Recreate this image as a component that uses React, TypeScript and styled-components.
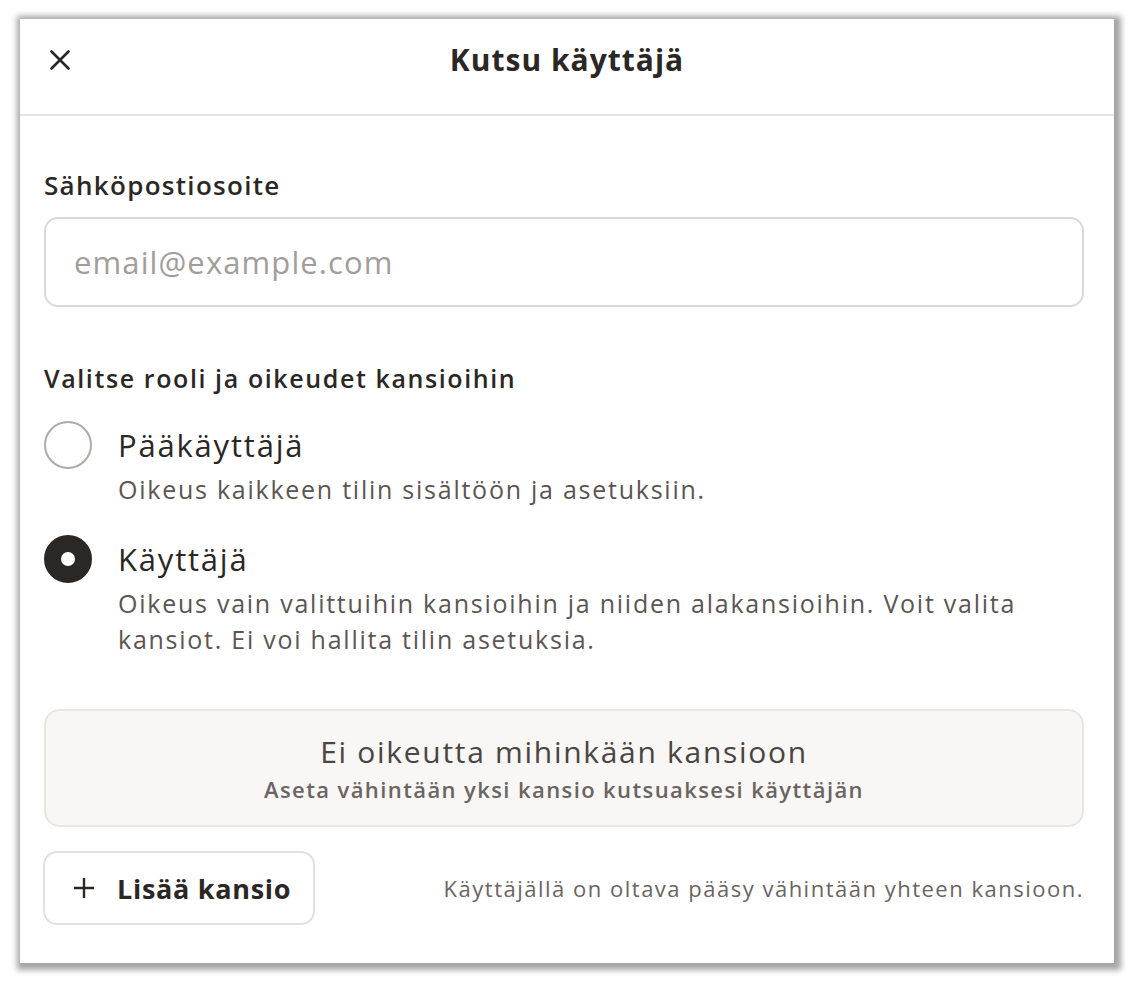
import React from 'react';
import styled, { createGlobalStyle } from 'styled-components';

const GlobalStyle = createGlobalStyle`
  html, body {
    margin: 0;
    padding: 0;
    background: #ffffff;
  }
  body {
    font-family: 'Open Sans', 'Noto Sans', sans-serif;
    color: #2b2725;
  }
`;

const Page = styled.div`
  width: 1134px;
  height: 982px;
  padding: 19px 20px 0 20px;
  box-sizing: border-box;
`;

const Dialog = styled.div`
  width: 1094px;
  height: 944px;
  background: #ffffff;
  box-shadow: 2px 2px 6px 5px rgba(0, 0, 0, 0.36);
  display: flex;
  flex-direction: column;
`;

const Header = styled.header`
  height: 97px;
  flex-shrink: 0;
  display: grid;
  grid-template-columns: 40px 1fr 40px;
  align-items: start;
  padding: 21px 30px 0 30px;
  border-bottom: 2px solid #e6e4e3;
  box-sizing: border-box;
`;

const CloseButton = styled.button`
  width: 20px;
  height: 20px;
  margin-top: 10px;
  padding: 0;
  border: none;
  background: transparent;
  display: flex;
  align-items: center;
  justify-content: center;
  cursor: pointer;
`;

const Title = styled.h1`
  margin: 0;
  text-align: center;
  font-size: 30px;
  font-weight: 700;
  line-height: 40px;
  letter-spacing: 1px;
  color: #2b2725;
`;

const Body = styled.div`
  flex: 1;
  padding: 53px 30px 0 24px;
  display: flex;
  flex-direction: column;
`;

const FieldLabel = styled.label`
  font-size: 26px;
  font-weight: 600;
  line-height: 32px;
  letter-spacing: 1.3px;
  color: #2b2725;
`;

const EmailInput = styled.input`
  margin-top: 16px;
  height: 90px;
  box-sizing: border-box;
  border: 2px solid #dcd8d5;
  border-radius: 14px;
  padding: 0 28px;
  font-family: inherit;
  font-size: 31px;
  letter-spacing: 1.1px;
  color: #2b2725;
  outline: none;

  &::placeholder {
    color: #a39d9a;
  }
`;

const SectionLabel = styled.div`
  margin-top: 55px;
  font-size: 25px;
  font-weight: 600;
  line-height: 32px;
  letter-spacing: 1.6px;
  color: #2b2725;
`;

const RoleList = styled.div`
  margin-top: 27px;
  display: flex;
  flex-direction: column;
  gap: 28px;
`;

const RoleRow = styled.label`
  display: flex;
  align-items: flex-start;
  gap: 26px;
  cursor: pointer;
`;

const Radio = styled.span<{ $checked?: boolean }>`
  flex-shrink: 0;
  width: 48px;
  height: 48px;
  box-sizing: border-box;
  border-radius: 50%;
  border: ${(p) => (p.$checked ? '17px solid #2b2725' : '2px solid #b0aaa7')};
  background: #ffffff;
`;

const RoleText = styled.div`
  display: flex;
  flex-direction: column;
`;

const RoleTitle = styled.div`
  font-size: 31px;
  font-weight: 400;
  line-height: 48px;
  letter-spacing: 1.8px;
  color: #2b2725;
`;

const RoleDescription = styled.div`
  margin-top: 2px;
  font-size: 25px;
  font-weight: 400;
  line-height: 36px;
  letter-spacing: 1.75px;
  color: #5c5552;
`;

const EmptyBox = styled.div`
  margin-top: 52px;
  height: 118px;
  box-sizing: border-box;
  background: #f8f7f5;
  border: 2px solid #e8e5e2;
  border-radius: 16px;
  display: flex;
  flex-direction: column;
  align-items: center;
  padding-top: 23px;
`;

const EmptyTitle = styled.div`
  font-size: 30px;
  line-height: 36px;
  letter-spacing: 1.7px;
  color: #4a4542;
`;

const EmptyHint = styled.div`
  margin-top: 5px;
  font-size: 22px;
  font-weight: 600;
  line-height: 28px;
  letter-spacing: 1.4px;
  color: #6b6461;
`;

const Footer = styled.div`
  margin-top: 24px;
  display: flex;
  align-items: center;
  justify-content: space-between;
`;

const AddButton = styled.button`
  margin-left: -1px;
  height: 74px;
  width: 272px;
  box-sizing: border-box;
  border: 2px solid #e4e0dd;
  border-radius: 14px;
  background: #ffffff;
  display: flex;
  align-items: center;
  gap: 22px;
  padding: 0 0 0 28px;
  font-family: inherit;
  font-size: 27px;
  font-weight: 700;
  letter-spacing: 0.7px;
  color: #2b2725;
  cursor: pointer;
`;

const FooterNote = styled.div`
  font-size: 22px;
  font-weight: 500;
  letter-spacing: 1.5px;
  color: #6b6461;
`;

const CloseIcon = () => (
  <svg width="20" height="20" viewBox="0 0 20 20" fill="none">
    <path d="M1.5 1.5L18.5 18.5M18.5 1.5L1.5 18.5" stroke="#2b2725" strokeWidth="2.6" strokeLinecap="round" />
  </svg>
);

const PlusIcon = () => (
  <svg width="22" height="22" viewBox="0 0 22 22" fill="none">
    <path d="M11 1V21M1 11H21" stroke="#2b2725" strokeWidth="2.4" />
  </svg>
);

export default function App() {
  return (
    <Page>
      <GlobalStyle />
      <Dialog>
        <Header>
          <CloseButton aria-label="Sulje">
            <CloseIcon />
          </CloseButton>
          <Title>Kutsu käyttäjä</Title>
          <span />
        </Header>
        <Body>
          <FieldLabel>Sähköpostiosoite</FieldLabel>
          <EmailInput type="email" placeholder="email@example.com" />

          <SectionLabel>Valitse rooli ja oikeudet kansioihin</SectionLabel>
          <RoleList>
            <RoleRow>
              <Radio />
              <RoleText>
                <RoleTitle>Pääkäyttäjä</RoleTitle>
                <RoleDescription>Oikeus kaikkeen tilin sisältöön ja asetuksiin.</RoleDescription>
              </RoleText>
            </RoleRow>
            <RoleRow>
              <Radio $checked />
              <RoleText>
                <RoleTitle>Käyttäjä</RoleTitle>
                <RoleDescription>
                  Oikeus vain valittuihin kansioihin ja niiden alakansioihin. Voit valita kansiot. Ei voi
                  hallita tilin asetuksia.
                </RoleDescription>
              </RoleText>
            </RoleRow>
          </RoleList>

          <EmptyBox>
            <EmptyTitle>Ei oikeutta mihinkään kansioon</EmptyTitle>
            <EmptyHint>Aseta vähintään yksi kansio kutsuaksesi käyttäjän</EmptyHint>
          </EmptyBox>

          <Footer>
            <AddButton>
              <PlusIcon />
              Lisää kansio
            </AddButton>
            <FooterNote>Käyttäjällä on oltava pääsy vähintään yhteen kansioon.</FooterNote>
          </Footer>
        </Body>
      </Dialog>
    </Page>
  );
}
